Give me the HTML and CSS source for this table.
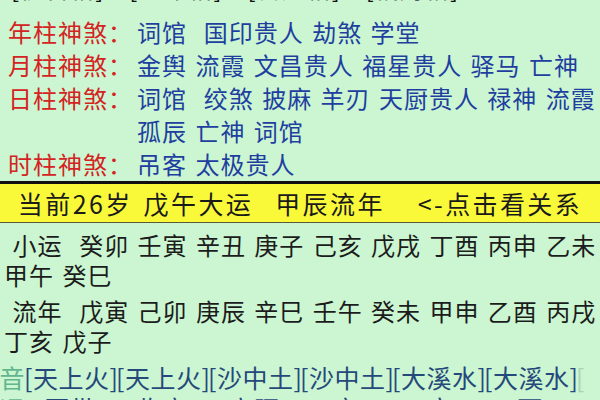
FILE: index.html
```html
<!DOCTYPE html>
<html lang="zh-CN">
<head>
<meta charset="utf-8">
<title>神煞</title>
<link rel="stylesheet" href="styles.css">
</head>
<body>
<div class="page">
  <div class="pillars">
    <div class="pillars-line">
      <span class="pillar"><b>[</b>伤官格<b>]</b></span>
      <span class="pillar"><b>[</b>正印格<b>]</b></span>
      <span class="pillar"><b>[</b>日元格<b>]</b></span>
      <span class="pillar"><b>[</b>偏财格<b>]</b></span>
    </div>
  </div>

  <div class="shensha">
    <div class="row"><div class="label">年柱神煞：</div><div class="value">词馆  国印贵人 劫煞 学堂</div></div>
    <div class="row"><div class="label">月柱神煞：</div><div class="value">金舆 流霞 文昌贵人 福星贵人 驿马 亡神</div></div>
    <div class="row"><div class="label">日柱神煞：</div><div class="value">词馆  绞煞 披麻 羊刃 天厨贵人 禄神 流霞 孤辰 亡神 词馆</div></div>
    <div class="row"><div class="label">时柱神煞：</div><div class="value">吊客 太极贵人</div></div>
  </div>

  <div class="current">当前26岁 戊午大运  甲辰流年   &lt;-点击看关系</div>

  <div class="yun">
    <p class="yun-line"> 小运  癸卯 壬寅 辛丑 庚子 己亥 戊戌 丁酉 丙申 乙未 甲午 癸巳</p>
    <p class="yun-line"> 流年  戊寅 己卯 庚辰 辛巳 壬午 癸未 甲申 乙酉 丙戌 丁亥 戊子</p>
  </div>

  <div class="grid nayin">
    <span class="lbl">纳音</span>
    <span>[天上火]</span><span>[天上火]</span><span>[沙中土]</span><span>[沙中土]</span><span>[大溪水]</span><span>[大溪水]</span><span class="fade">[</span>
  </div>
  <div class="grid stage">
    <span class="lbl">星运</span>
    <span>冠带</span><span>临官</span><span>帝旺</span><span>衰</span><span>病</span><span>死</span><span class="fade"></span>
  </div>
</div>
</body>
</html>
```

FILE: styles.css
```css
html, body {
  margin: 0;
  padding: 0;
  overflow: hidden;
  background: #cbf6d1;
}

.page {
  width: 600px;
  height: 400px;
  overflow: hidden;
  font-family: "Noto Sans CJK SC", "Noto Sans", sans-serif;
  font-size: 24px;
  letter-spacing: 1px;
  word-spacing: 2px;
}

/* top pillar row (mostly scrolled out of view) */
.pillars {
  height: 15px;
  overflow: hidden;
}
.pillars-line {
  margin-top: -29px;
  line-height: 33px;
  display: flex;
  gap: 25px;
  padding-left: 11px;
  white-space: nowrap;
  color: #3a3a3a;
}
.pillar b {
  font-weight: normal;
  color: #111;
}

/* shensha rows */
.shensha {
  padding-left: 8px;
}
.row {
  display: grid;
  grid-template-columns: 129px 1fr;
  line-height: 33px;
}
.label {
  color: #d42323;
  white-space: nowrap;
}
.value {
  color: #1f3fa0;
  white-space: pre-wrap;
}

/* yellow current bar */
.current {
  margin-top: 1px;
  border-top: 3px solid #111;
  border-bottom: 1px solid #5a5a3a;
  background: #f9f93a;
  color: #1a1a1a;
  font-size: 25px;
  letter-spacing: 2.4px;
  word-spacing: 3px;
  line-height: 38px;
  text-align: center;
  white-space: pre;
}

/* xiaoyun / liunian */
.yun {
  padding: 7px 0 0 4px;
}
.yun-line {
  margin: 0 0 6px;
  line-height: 30px;
  color: #1c1c1c;
  white-space: pre-wrap;
}

/* nayin / star stage grid */
.grid {
  display: grid;
  grid-template-columns: 50px repeat(7, 92px);
  width: max-content;
  margin-left: -26px;
  line-height: 30px;
  font-size: 25px;
  letter-spacing: 0.5px;
  white-space: nowrap;
  color: #25497a;
}
.grid .lbl {
  color: #63b58f;
}
.grid .fade {
  color: #a9d4bb;
}
.stage {
  margin-top: 1px;
}
.stage span {
  text-align: center;
}
.stage .lbl {
  text-align: left;
}
```
